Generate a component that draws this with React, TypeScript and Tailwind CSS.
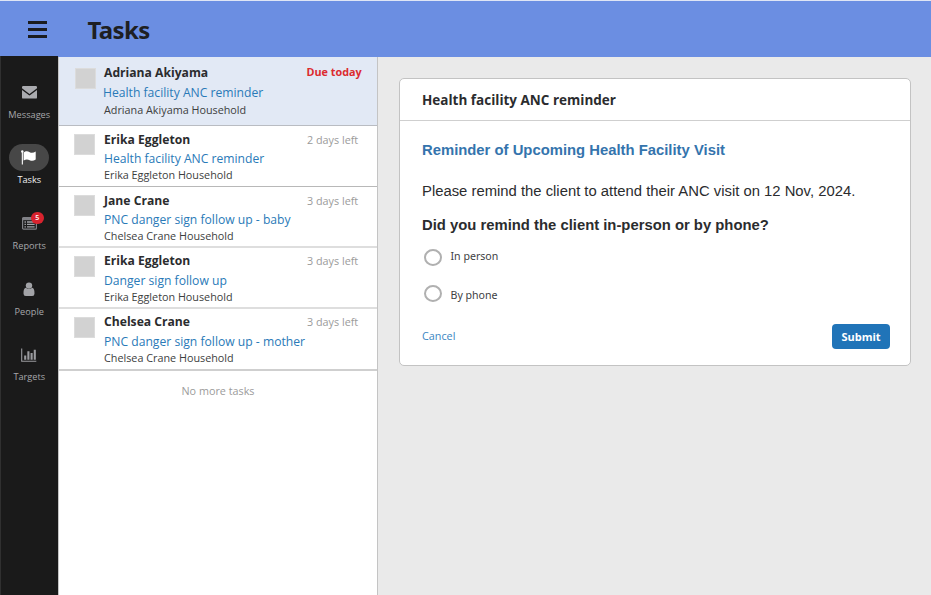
import React from "react";

type Task = {
  name: string;
  title: string;
  household: string;
  due: string;
  urgent?: boolean;
  row: string;
  box: string;
  titleCls: string;
  houseCls: string;
};

const tasks: Task[] = [
  {
    name: "Adriana Akiyama",
    title: "Health facility ANC reminder",
    household: "Adriana Akiyama Household",
    due: "Due today",
    urgent: true,
    row: "h-[69px] border-b border-[#b9bcc2] bg-[#e2e9f5] pt-2 pl-4",
    box: "mt-[3px] mr-2",
    titleCls: "mt-1 -ml-px",
    houseCls: "mt-px",
  },
  {
    name: "Erika Eggleton",
    title: "Health facility ANC reminder",
    household: "Erika Eggleton Household",
    due: "2 days left",
    row: "h-[61px] border-b border-[#b8b8b8] pt-[6px] pl-[15px]",
    box: "mt-[2px] mr-[9px]",
    titleCls: "mt-[3px]",
    houseCls: "mt-0",
  },
  {
    name: "Jane Crane",
    title: "PNC danger sign follow up - baby",
    household: "Chelsea Crane Household",
    due: "3 days left",
    row: "h-[61px] border-b-2 border-[#dedede] pt-[6px] pl-[15px]",
    box: "mt-[2px] mr-[9px]",
    titleCls: "mt-[3px]",
    houseCls: "mt-0",
  },
  {
    name: "Erika Eggleton",
    title: "Danger sign follow up",
    household: "Erika Eggleton Household",
    due: "3 days left",
    row: "h-[61px] border-b-2 border-[#dedede] pt-[5px] pl-[15px]",
    box: "mt-[3px] mr-[9px]",
    titleCls: "mt-1",
    houseCls: "mt-0",
  },
  {
    name: "Chelsea Crane",
    title: "PNC danger sign follow up - mother",
    household: "Chelsea Crane Household",
    due: "3 days left",
    row: "h-[62px] border-b-2 border-[#cfcfcf] pt-[5px] pl-[15px]",
    box: "mt-[3px] mr-[9px]",
    titleCls: "mt-1",
    houseCls: "mt-0",
  },
];

function MailIcon() {
  return (
    <svg width="15" height="13" viewBox="0 0 15 13" fill="#aaabaf">
      <path d="M1.2 0h12.6Q15 0 15 1.2v1L7.5 8 0 2.2v-1Q0 0 1.2 0zM0 3.9l6.7 5.2q.8.6 1.6 0L15 3.9v7.5q0 1.2-1.2 1.2H1.2Q0 12.6 0 11.4z" />
    </svg>
  );
}

function FlagIcon() {
  return (
    <svg width="16" height="15" viewBox="0 0 16 15" fill="#fff">
      <circle cx="1.3" cy="1.4" r="1.2" />
      <path d="M.8 1.5h1.1V14.5H.8z" />
      <path d="M2.6 2.6C5 .7 6.8 1.3 8.7 2.3c2 .9 3.9.6 6-.8v8c-2.1 1.5-4 1.7-6 .7-1.9-.9-3.7-1.2-6.1.4z" />
    </svg>
  );
}

function ReportsIcon() {
  return (
    <svg width="15" height="13" viewBox="0 0 15 13">
      <rect x=".6" y=".6" width="13.8" height="11.6" rx="1" fill="none" stroke="#808186" strokeWidth="1.2" />
      <path d="M.6.6h13.8v2.6H.6z" fill="#808186" />
      <path d="M2.5 5h1.4M2.5 7.4h1.4M2.5 9.8h1.4M5 5h7.6M5 7.4h7.6M5 9.8h7.6" stroke="#a2a3a8" strokeWidth="1.3" />
    </svg>
  );
}

function PersonIcon() {
  return (
    <svg width="12" height="15" viewBox="0 0 12 15" fill="#a2a3a7">
      <circle cx="6" cy="3.6" r="3.2" />
      <path d="M2.9 5.8a4.3 4.3 0 0 0 6.2 0C10.9 6.3 11.5 8 11.5 11.4q0 2.6-2.3 2.6H2.8Q.5 14 .5 11.4C.5 8 1.1 6.3 2.9 5.8z" />
    </svg>
  );
}

function ChartIcon() {
  return (
    <svg width="16" height="14" viewBox="0 0 16 14">
      <path d="M.7.5v12.8H15.3" fill="none" stroke="#9a9b9f" strokeWidth="1.1" />
      <path d="M4.2 7.5v4.3M7.4 3.2v8.6M10.6 5v6.8M13.8 1.8v10" stroke="#9a9b9f" strokeWidth="2.1" />
    </svg>
  );
}

const nav = [
  { label: "Messages", icon: <MailIcon />, cls: "mt-[23px]" },
  { label: "Tasks", icon: <FlagIcon />, cls: "mt-[21px]", active: true },
  { label: "Reports", icon: <ReportsIcon />, cls: "mt-[22px]", badge: "5" },
  { label: "People", icon: <PersonIcon />, cls: "mt-[22px]" },
  { label: "Targets", icon: <ChartIcon />, cls: "mt-[21px]" },
];

function Sidebar() {
  return (
    <nav className="-mt-px flex w-[58px] shrink-0 flex-col items-center border-l border-[#303030] bg-[#1a1a1a] pr-px">
      {nav.map((n) => (
        <div key={n.label} className={`flex flex-col items-center ${n.cls}`}>
          <div
            className={`relative flex h-[27px] w-10 items-center justify-center rounded-full ${
              n.active ? "bg-[#474747]" : ""
            }`}
          >
            {n.icon}
            {n.badge && (
              <span className="absolute top-[1.5px] right-[5.5px] flex size-[12.5px] items-center justify-center rounded-full bg-[#d9232e] text-[7px] font-semibold text-white">
                {n.badge}
              </span>
            )}
          </div>
          <span
            className={`mt-px ml-[0.5px] h-4 text-[9.2px] leading-4 ${
              n.active ? "font-medium text-[#f0f0f0]" : "text-[#a6a7aa]"
            }`}
          >
            {n.label}
          </span>
        </div>
      ))}
    </nav>
  );
}

function TaskRow({ t }: { t: Task }) {
  return (
    <li className={`flex items-start ${t.row}`}>
      <span className={`size-[21px] shrink-0 border border-[#dcdcdc] bg-[#d2d2d2] ${t.box}`} />
      <div className="w-[203px] whitespace-nowrap">
        <p className="text-[12.15px] leading-4 font-bold text-[#2b2c2e]">{t.name}</p>
        <p className={`text-[12.15px] leading-4 text-[#2a7ab8] ${t.titleCls}`}>{t.title}</p>
        <p className={`text-[10.8px] leading-4 text-[#3d3e40] ${t.houseCls}`}>{t.household}</p>
      </div>
      <span
        className={`text-[10.8px] leading-4 whitespace-nowrap ${
          t.urgent ? "-mt-px -ml-[0.5px] font-bold text-[#dc2b2f]" : "text-[#9b9b9b]"
        }`}
      >
        {t.due}
      </span>
    </li>
  );
}

function Radio({ label, cls, labelCls }: { label: string; cls: string; labelCls: string }) {
  return (
    <label className={`flex h-[17px] items-start ${cls}`}>
      <span className="h-[17px] w-[18px] shrink-0 rounded-[50%] border-2 border-[#b0b0b0] bg-white" />
      <span className={`ml-[8.5px] font-['Noto_Sans',sans-serif] text-[10.6px] leading-4 text-[#404143] ${labelCls}`}>
        {label}
      </span>
    </label>
  );
}

export default function App() {
  return (
    <div className="flex h-[595px] w-[931px] flex-col overflow-hidden bg-[#eaeaea] font-['Open_Sans',sans-serif]">
      <header className="flex h-[57px] shrink-0 items-center border-t border-[#dfe5f5] bg-[#6b8ee2]">
        <button className="mt-px ml-7 flex w-[19px] flex-col gap-1" aria-label="Menu">
          <span className="h-[3px] bg-[#1b1c20]" />
          <span className="h-[3px] bg-[#1b1c20]" />
          <span className="h-[3px] bg-[#1b1c20]" />
        </button>
        <h1 className="mt-px ml-[40.5px] font-['Noto_Sans',sans-serif] text-[24px] leading-8 font-bold tracking-[-0.65px] text-[#1e1f23]">
          Tasks
        </h1>
      </header>
      <div className="flex min-h-0 flex-1">
        <Sidebar />
        <section className="w-[320px] shrink-0 border-r border-l border-[#c4c4c4] bg-white">
          <ul>
            {tasks.map((t, i) => (
              <TaskRow key={i} t={t} />
            ))}
          </ul>
          <p className="mt-3 text-center text-[10.8px] leading-4 text-[#9b9b9b]">No more tasks</p>
        </section>
        <main className="flex-1 pt-[21px] pl-[21px]">
          <div className="h-[288px] w-[512px] rounded-[5px] border border-[#c3c3c3] bg-white">
            <h2 className="h-[42px] border-b border-[#cfcfcf] pt-[13px] pl-[22px] text-[13.5px] leading-4 font-bold text-[#2b2c2e]">
              Health facility ANC reminder
            </h2>
            <div className="px-[22px] font-['Liberation_Sans',sans-serif] text-[14.83px] leading-5 text-[#2b2c2e]">
              <h3 className="pt-[19px] font-bold text-[#3474ad]">Reminder of Upcoming Health Facility Visit</h3>
              <p className="mt-[21px]">Please remind the client to attend their ANC visit on 12 Nov, 2024.</p>
              <p className="mt-[14px] font-bold">Did you remind the client in-person or by phone?</p>
            </div>
            <div className="pl-6">
              <Radio label="In person" cls="mt-[14px]" labelCls="-mt-px" />
              <Radio label="By phone" cls="mt-[19px]" labelCls="mt-[2px]" />
            </div>
            <div className="mt-[22px] flex items-start justify-between pr-5 pl-[22px]">
              <a className="mt-1 text-[10.8px] leading-4 text-[#3a86c2]">Cancel</a>
              <button className="h-[25px] w-[58px] rounded bg-[#2074b8] text-[11px] leading-4 font-bold text-white">
                Submit
              </button>
            </div>
          </div>
        </main>
      </div>
    </div>
  );
}
